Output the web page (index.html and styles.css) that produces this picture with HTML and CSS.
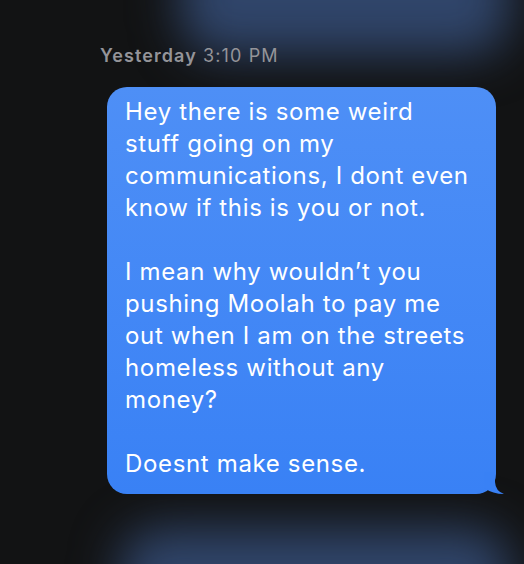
FILE: index.html
```html
<!DOCTYPE html>
<html>
<head>
<meta charset="utf-8">
<link rel="stylesheet" href="styles.css">
</head>
<body>
<div class="screen">
  <div class="glow glow-top"></div>
  <div class="glow glow-bottom"></div>
  <div class="thread">
    <div class="stamp"><span class="day">Yesterday</span> 3:10 PM</div>
    <div class="bubble">
      <p>Hey there is some weird<br>stuff going on my<br>communications, I dont even<br>know if this is you or not.</p>
      <p>I mean why wouldn’t you<br>pushing Moolah to pay me<br>out when I am on the streets<br>homeless without any<br>money?</p>
      <p>Doesnt make sense.</p>
      <svg class="tail" width="30" height="22" viewBox="0 0 30 22"><path d="M20 0 L20 10 Q20.5 19 29 22 Q18 22 9 16 L9 0 Z" fill="#3981f5"/></svg>
    </div>
  </div>
</div>
</body>
</html>
```
FILE: styles.css
```css
html, body { margin: 0; padding: 0; }
body { background: #121314; }
.screen {
  position: relative;
  width: 524px;
  height: 564px;
  overflow: hidden;
  background: #121314;
  font-family: Inter, "Noto Sans", sans-serif;
}
.glow {
  position: absolute;
  border-radius: 40px;
  filter: blur(24px);
  background: #30456a;
}
.glow-top { left: 180px; top: -60px; width: 330px; height: 115px; }
.glow-bottom { left: 120px; top: 528px; width: 390px; height: 100px; }
.thread {
  position: relative;
  padding: 45px 0 0 100px;
  display: flex;
  flex-direction: column;
  align-items: flex-start;
}
.stamp {
  color: #949499;
  font-size: 18px;
  line-height: 22px;
  letter-spacing: 1.1px;
}
.stamp .day { font-weight: 600; }
.bubble {
  position: relative;
  margin: 20px 0 0 7px;
  width: 389px;
  box-sizing: border-box;
  padding: 9px 18px 14px;
  border-radius: 20px;
  background: linear-gradient(#4e8ff6, #3981f5);
  color: #fff;
  font-size: 24px;
  line-height: 32px;
  letter-spacing: 0.65px;
}
.bubble p { margin: 0 0 32px; }
.bubble p:last-of-type { margin-bottom: 0; }
.tail { position: absolute; right: -9px; bottom: 0; display: block; }
```
